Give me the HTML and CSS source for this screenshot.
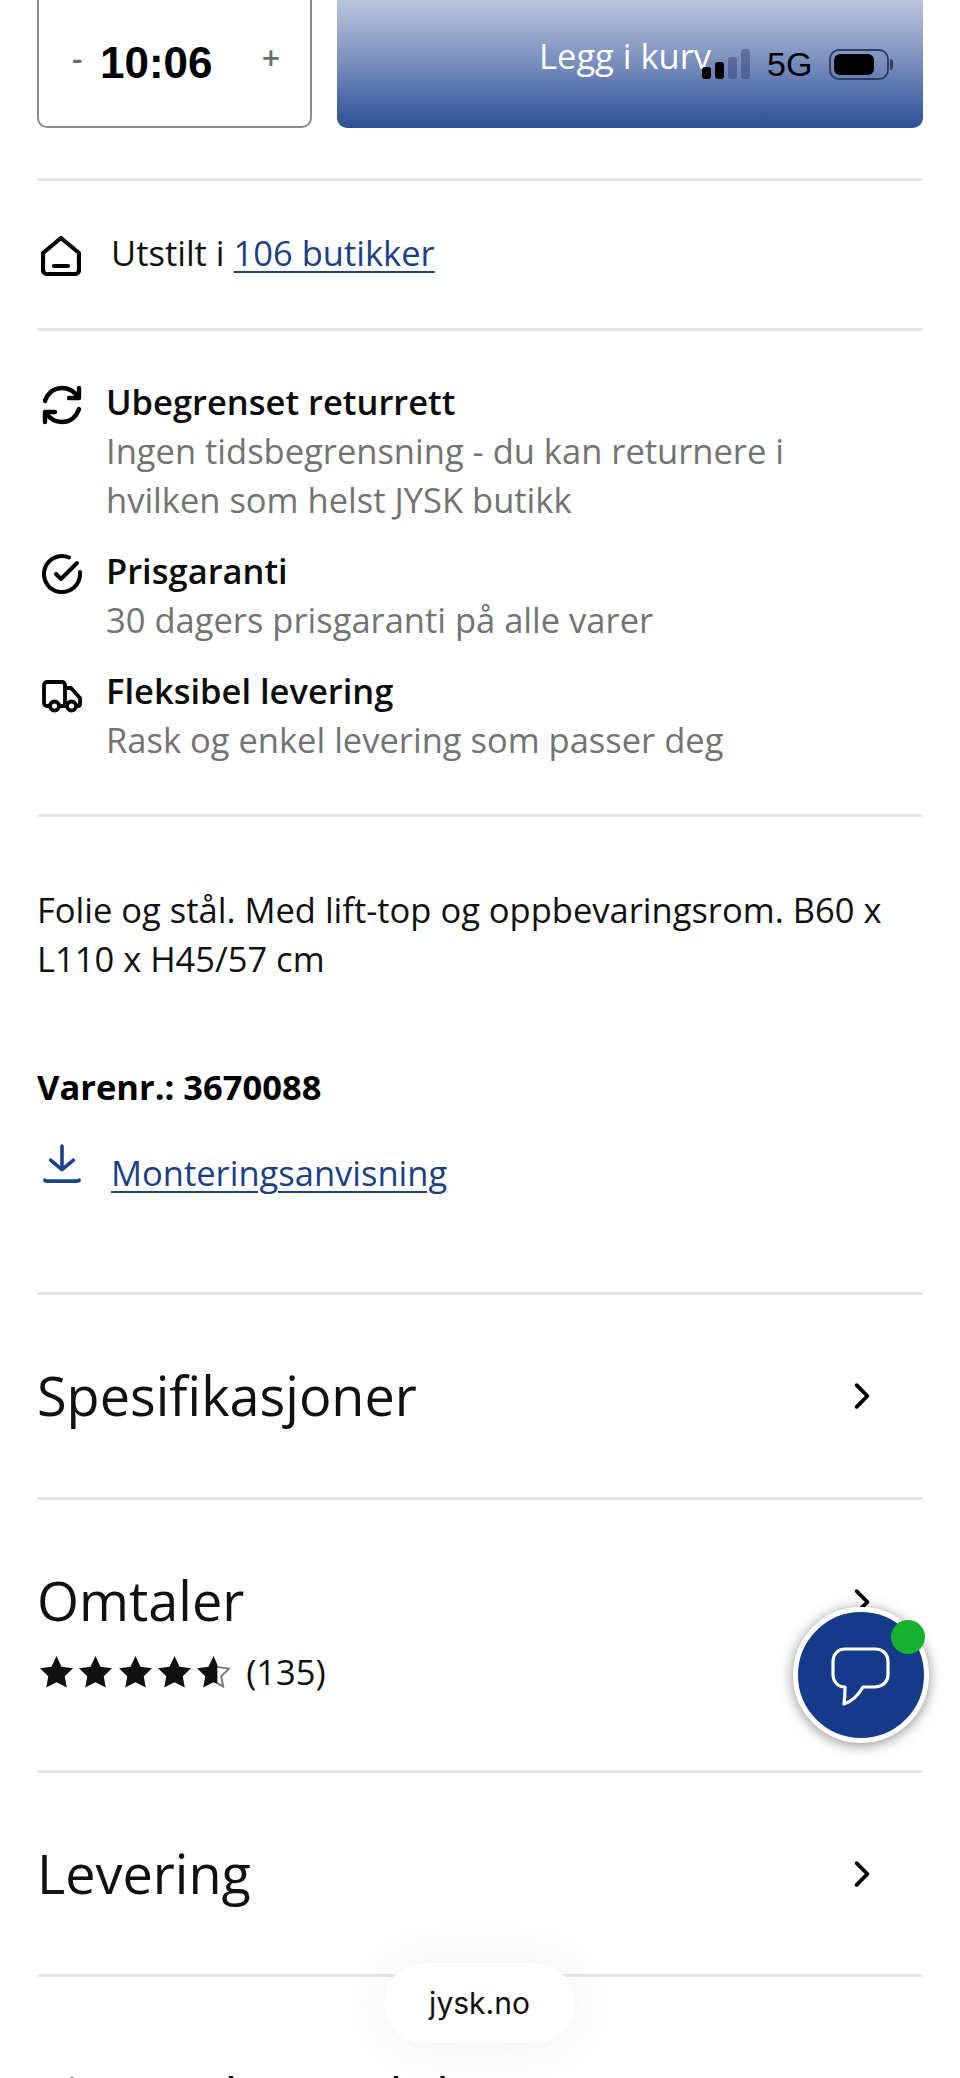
FILE: index.html
```html
<!DOCTYPE html>
<html lang="no">
<head>
    <meta charset="UTF-8">
    <meta name="viewport" content="width=device-width, initial-scale=1.0">
    <title>JYSK</title>
    <link rel="stylesheet" href="styles.css">
</head>
<body>
    <div class="page">
        <div class="buy-row">
            <div class="qty">
                <span class="qty-btn">-</span>
                <span class="qty-btn">+</span>
            </div>
            <button class="add-btn">Legg i kurv</button>
        </div>

        <section class="store">
            <svg class="icon" viewBox="0 0 40 40" fill="none" stroke="#000" stroke-width="4.2" stroke-linejoin="round" stroke-linecap="round">
                <path d="M20 2 L38 17 V34 a4 4 0 0 1 -4 4 H6 a4 4 0 0 1 -4 -4 V17 Z"/>
                <path d="M13 30 H27"/>
            </svg>
            <p>Utstilt i <a href="#">106 butikker</a></p>
        </section>

        <section class="perks">
            <div class="perk">
                <svg class="icon" viewBox="0 0 40 40" fill="none" stroke="#000" stroke-width="4.4" stroke-linecap="round" stroke-linejoin="round">
                    <path d="M3 16 C6 7 13 3 20 3 C27 3 32 6 36 12"/>
                    <path d="M37 3 V13 H27"/>
                    <path d="M37 24 C34 33 27 37 20 37 C13 37 8 34 4 28"/>
                    <path d="M3 37 V27 H13"/>
                </svg>
                <div>
                    <h3>Ubegrenset returrett</h3>
                    <p>Ingen tidsbegrensning - du kan returnere i hvilken som helst JYSK butikk</p>
                </div>
            </div>
            <div class="perk">
                <svg class="icon" viewBox="0 0 40 40" fill="none" stroke="#000" stroke-width="4" stroke-linecap="round" stroke-linejoin="round">
                    <path d="M38 18 V20 A18 18 0 1 1 27 3.5"/>
                    <path d="M14 20 L19 25 L35 9"/>
                </svg>
                <div>
                    <h3>Prisgaranti</h3>
                    <p>30 dagers prisgaranti på alle varer</p>
                </div>
            </div>
            <div class="perk">
                <svg class="icon" viewBox="0 0 40 40" fill="none" stroke="#000" stroke-width="3.8" stroke-linecap="round" stroke-linejoin="round">
                    <path d="M8 32 H5 a3 3 0 0 1 -3 -3 V11 a3 3 0 0 1 3 -3 H20 a3 3 0 0 1 3 3 V32 H17"/>
                    <path d="M23 14 H29 L38 24 V30 a2 2 0 0 1 -2 2 H34"/>
                    <circle cx="12.5" cy="32" r="4.5"/>
                    <circle cx="29.5" cy="32" r="4.5"/>
                </svg>
                <div>
                    <h3>Fleksibel levering</h3>
                    <p>Rask og enkel levering som passer deg</p>
                </div>
            </div>
        </section>

        <section class="details">
            <p class="desc">Folie og stål. Med lift-top og oppbevaringsrom. B60 x L110 x H45/57 cm</p>
            <p class="sku">Varenr.: 3670088</p>
            <div class="manual">
                <svg class="icon icon-dl" viewBox="0 0 40 42" fill="none" stroke="#1d4289" stroke-width="3.8" stroke-linecap="round" stroke-linejoin="round">
                    <path d="M20 2 V26"/>
                    <path d="M8 17 L20 27 L32 17"/>
                    <path d="M2 38 C2 39 3 39 5 39 H35 C37 39 38 39 38 38"/>
                </svg>
                <a href="#">Monteringsanvisning</a>
            </div>
        </section>

        <section class="fold fold-spec">
            <h2>Spesifikasjoner</h2>
            <svg class="chevron" viewBox="0 0 16 26" fill="none" stroke="#000" stroke-width="3.6" stroke-linecap="round" stroke-linejoin="round"><path d="M3 3 L13 13 L3 23"/></svg>
        </section>

        <section class="fold fold-reviews">
            <div>
                <h2>Omtaler</h2>
                <div class="rating">
                    <div class="stars">
                        <svg viewBox="0 0 34 33"><path d="M17 0 L22.2 11 L34 12.6 L25.5 21 L27.6 32.5 L17 27 L6.4 32.5 L8.5 21 L0 12.6 L11.8 11 Z"/></svg>
                        <svg viewBox="0 0 34 33"><path d="M17 0 L22.2 11 L34 12.6 L25.5 21 L27.6 32.5 L17 27 L6.4 32.5 L8.5 21 L0 12.6 L11.8 11 Z"/></svg>
                        <svg viewBox="0 0 34 33"><path d="M17 0 L22.2 11 L34 12.6 L25.5 21 L27.6 32.5 L17 27 L6.4 32.5 L8.5 21 L0 12.6 L11.8 11 Z"/></svg>
                        <svg viewBox="0 0 34 33"><path d="M17 0 L22.2 11 L34 12.6 L25.5 21 L27.6 32.5 L17 27 L6.4 32.5 L8.5 21 L0 12.6 L11.8 11 Z"/></svg>
                        <svg viewBox="0 0 34 33">
                            <path class="star-empty" d="M21 11 L22.2 11.5 L33 13 L25 21 L27 31.5 L21 28"/>
                            <path d="M17 0 L21 9 L21 29 L17 27 L6.4 32.5 L8.5 21 L0 12.6 L11.8 11 Z"/>
                        </svg>
                    </div>
                    <span>(135)</span>
                </div>
            </div>
            <svg class="chevron" viewBox="0 0 16 26" fill="none" stroke="#000" stroke-width="3.6" stroke-linecap="round" stroke-linejoin="round"><path d="M3 3 L13 13 L3 23"/></svg>
        </section>

        <section class="fold fold-delivery">
            <h2>Levering</h2>
            <svg class="chevron" viewBox="0 0 16 26" fill="none" stroke="#000" stroke-width="3.6" stroke-linecap="round" stroke-linejoin="round"><path d="M3 3 L13 13 L3 23"/></svg>
        </section>

        <h2 class="next-title">Lignende produkter</h2>
    </div>

    <!-- phone status bar, lies over the page -->
    <div class="clock">10:06</div>
    <div class="status">
        <div class="signal"><i></i><i></i><i class="off"></i><i class="off"></i></div>
        <span class="net">5G</span>
        <div class="battery"><b></b></div>
    </div>

    <button class="chat">
        <svg viewBox="0 0 60 62" fill="none" stroke="#fff" stroke-width="3.2" stroke-linejoin="round">
            <path d="M14 2 H44 C52 2 57 7 57 15 V27 C57 35 52 39 44 40 H32 C28 47 22 54 13 57 C14 50 14 45 14 40 C7 40 2 35 2 27 V15 C2 7 7 2 14 2 Z"/>
        </svg>
        <span class="online"></span>
    </button>

    <div class="url-pill">jysk.no</div>
</body>
</html>
```

FILE: styles.css
```css
/* --- page --- */
body {
    margin: 0;
    height: 2078px;
    overflow: hidden;
    background: #fff;
    color: #111;
    font-family: 'Open Sans', sans-serif;
    font-size: 34.5px;
    line-height: 49px;
}

p, h2, h3 { margin: 0; font-weight: 400; }
a { color: #1d3f85; text-decoration: underline; text-decoration-thickness: 2px; text-underline-offset: 5px; }

.page { padding: 0 37px; margin-top: -59px; }
.icon { width: 40px; height: 40px; flex: none; }

/* --- buy row --- */
.buy-row { display: flex; gap: 25px; height: 187px; }
.qty {
    width: 275px;
    box-sizing: border-box;
    border: 2px solid #8c8c8c;
    border-radius: 10px;
    display: flex;
    justify-content: space-between;
    align-items: center;
    padding: 46px 30px 0 33px;
    color: #6e6e6e;
    font-size: 32px;
    font-weight: 600;
}
.add-btn {
    flex: 1;
    border: none;
    border-radius: 10px;
    padding: 42px 0 0 202px;
    text-align: left;
    color: #fff;
    font: 400 34.5px 'Open Sans', sans-serif;
    background: linear-gradient(#dfe3f0 0%, #bac4dd 32%, #7f93c0 62%, #2e4f96 100%);
}

/* --- sections --- */
.store {
    margin-top: 50px;
    height: 147px;
    border-top: 3px solid #e6e6e6;
    border-bottom: 3px solid #e6e6e6;
    display: flex;
    align-items: center;
    gap: 30px;
    padding-left: 4px;
}
.store .icon { margin-top: 2px; }
.store p { margin-top: -4px; }

.perks {
    padding: 46px 0 50px;
    border-bottom: 3px solid #e6e6e6;
    display: flex;
    flex-direction: column;
    gap: 22px;
}
.perk { display: flex; gap: 24px; padding-left: 5px; }
.perk .icon { margin-top: 8px; }
.perk h3 { font-size: 34.5px; font-weight: 600; color: #0c0c0c; }
.perk p { color: #737373; max-width: 760px; }

.details { padding: 68px 0 95px; border-bottom: 3px solid #e6e6e6; }
.sku { margin-top: 79px; font-weight: 700; color: #000; }
.manual { display: flex; gap: 30px; margin-top: 37px; padding-left: 6px; align-items: flex-start; }
.icon-dl { width: 38px; height: 42px; margin-top: -5px; }
.manual a { line-height: 49px; }

.fold {
    display: flex;
    justify-content: space-between;
    align-items: center;
    border-bottom: 3px solid #e6e6e6;
    padding-right: 52px;
    box-sizing: content-box;
}
.fold h2, .next-title { font-size: 54px; line-height: 72px; color: #111; }
.fold h2 { margin-bottom: 2px; }
.fold-spec { height: 202px; }
.fold-reviews { height: 206px; padding-top: 64px; align-items: flex-start; }
.fold-reviews .chevron { margin-top: 24px; }
.fold-delivery { height: 201px; }
.chevron { width: 18px; height: 28px; }

.rating { display: flex; align-items: center; gap: 16px; margin-top: 11px; padding-left: 3px; }
.stars { display: flex; gap: 6.3px; }
.stars svg { width: 33px; height: 32px; fill: #111; }
.stars .star-empty { fill: none; stroke: #777; stroke-width: 2; }

.next-title { margin-top: 84px; }

/* --- phone status bar --- */
.clock {
    position: absolute;
    left: 100px;
    top: 36px;
    font: 700 44px/54px 'Liberation Sans', sans-serif;
    color: #000;
}
.status {
    position: absolute;
    left: 702px;
    top: 46px;
    display: flex;
    align-items: center;
    height: 36px;
}
.signal { display: flex; gap: 4px; align-items: flex-end; height: 30px; }
.signal i { width: 9px; background: #000; border-radius: 3px; }
.signal i:nth-child(1) { height: 12px; }
.signal i:nth-child(2) { height: 17px; }
.signal i:nth-child(3) { height: 22px; }
.signal i:nth-child(4) { height: 30px; }
.signal i.off { background: rgba(20, 40, 90, 0.35); }
.net { font: 400 34px/36px 'Liberation Sans', sans-serif; color: #000; margin-left: 17px; }
.battery {
    position: relative;
    box-sizing: border-box;
    width: 60px;
    height: 31px;
    margin-left: 17px;
    border: 2px solid #2d3d66;
    border-radius: 10px;
    padding: 3px;
}
.battery b { display: block; width: 40px; height: 21px; background: #000; border-radius: 6px; }
.battery::after {
    content: "";
    position: absolute;
    right: -6px;
    top: 8px;
    width: 3px;
    height: 11px;
    background: #2d3d66;
    border-radius: 0 3px 3px 0;
}

/* --- chat button --- */
.chat {
    position: absolute;
    left: 793px;
    top: 1607px;
    width: 136px;
    height: 136px;
    box-sizing: border-box;
    padding: 0;
    border: 5px solid #fff;
    border-radius: 50%;
    background: #163a8a;
    box-shadow: 0 2px 14px rgba(0, 0, 0, 0.45);
    display: flex;
    align-items: center;
    justify-content: center;
}
.chat svg { width: 60px; height: 62px; margin-top: 6px; }
.online {
    position: absolute;
    right: -1px;
    top: 8px;
    width: 34px;
    height: 34px;
    border-radius: 50%;
    background: #16b22e;
}

/* --- browser url pill --- */
.url-pill {
    position: absolute;
    left: 384px;
    top: 1963px;
    width: 191px;
    height: 80px;
    border-radius: 40px;
    background: #fff;
    box-shadow: 0 0 50px rgba(0, 0, 0, 0.07);
    font: 400 30px/80px Inter, sans-serif;
    text-align: center;
    color: #111;
}
```
